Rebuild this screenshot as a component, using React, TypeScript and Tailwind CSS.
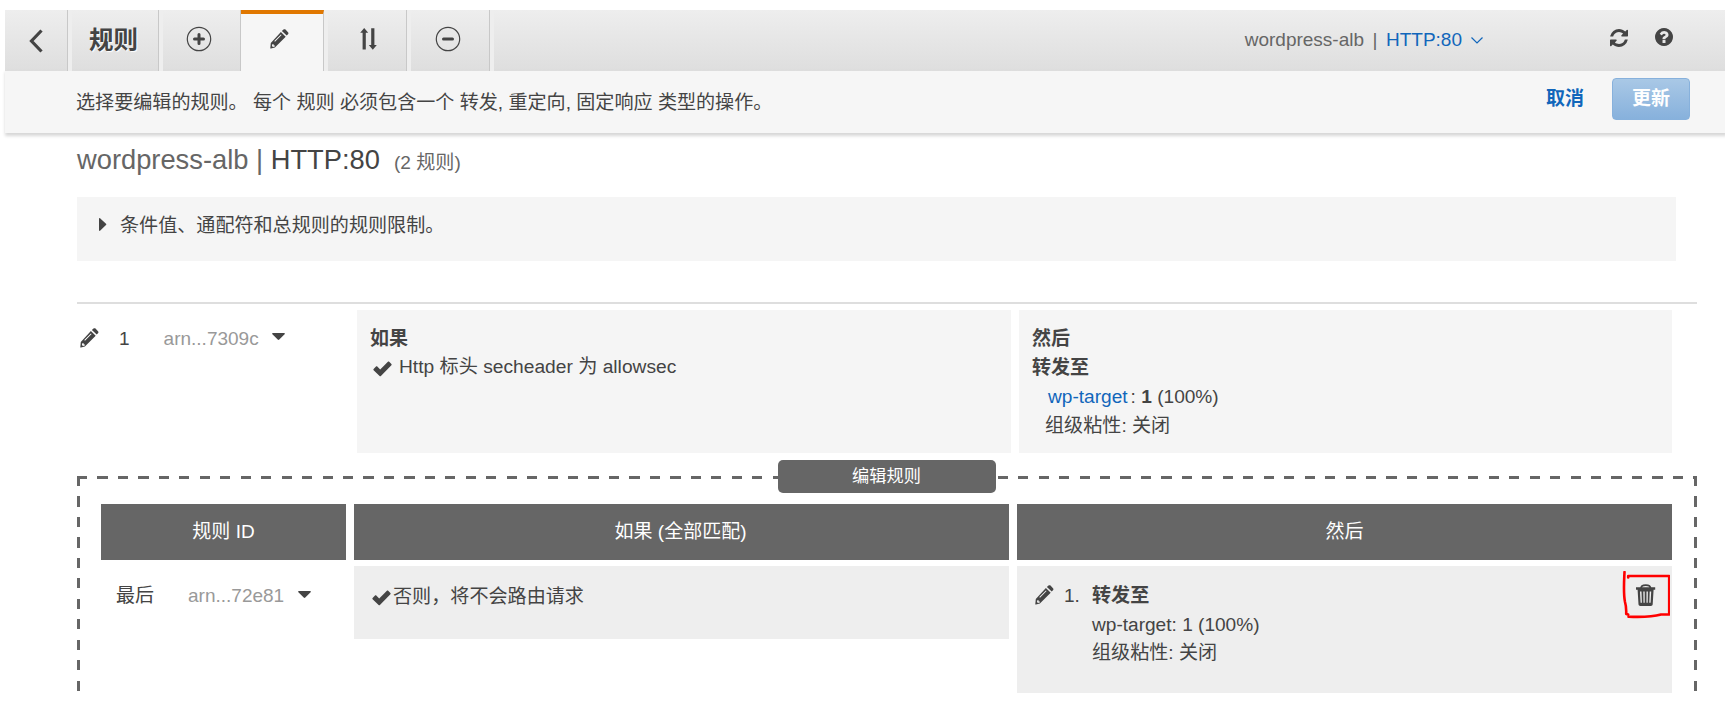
import type { ReactNode } from "react";

function Pencil() {
  return (
    <svg width="19" height="20" viewBox="0 0 19 20" fill="#444" className="block shrink-0">
      <path d="M11.900 2.100 13.500.6c.6-.6 1.400-.6 2 0L18 3.200c.6.600.6 1.400 0 2L16.700 6.600z" />
      <path fillRule="evenodd" d="M10.900 3 15.700 7.700 4.900 18.600 1 19.600H.3V18.900L.8 14zM10.900 5.400 4.300 12l.7.7 6.600-6.600zM2.300 15.300 1.900 17.100l1.100 1 1.900-.5-.1-1.200-1.200-.1-.1-1.200z" />
    </svg>
  );
}

function Check() {
  return (
    <svg width="19" height="16" viewBox="0 0 19 16" fill="#444" className="block shrink-0">
      <path d="M.6 7.900 3 5.500c.4-.4.900-.4 1.300 0L7.200 8.400 14.900.7c.4-.4.900-.4 1.300 0l2.200 2.200c.4.4.4.900 0 1.300L7.900 14.900c-.4.4-.900.4-1.300 0L.6 9.200c-.4-.4-.4-.900 0-1.300z" />
    </svg>
  );
}

function Caret() {
  return (
    <svg width="13" height="7" viewBox="0 0 13 7" fill="#444" className="block shrink-0">
      <path d="M1 0h11c.9 0 1.200.7.6 1.300L7.300 6.600c-.5.5-1.100.5-1.600 0L.4 1.300C-.2.7.1 0 1 0z" />
    </svg>
  );
}

function CircleIcon({ plus = false }: { plus?: boolean }) {
  return (
    <svg width="26" height="26" viewBox="0 0 26 26" fill="none" stroke="#444" className="-mt-1 block">
      <circle cx="13" cy="13" r="11.700" strokeWidth="1.200" />
      <path d={plus ? "M8.500 13h9M13 8.500v9" : "M8.500 13h9"} strokeWidth="3" strokeLinecap="round" />
    </svg>
  );
}

function Cell({ children, className }: { children?: ReactNode; className: string }) {
  return (
    <div className={`flex h-[61px] shrink-0 items-center justify-center border-r border-[#c8c8c8] ${className}`}>
      {children}
    </div>
  );
}

function Gap() {
  return <div className="h-[61px] w-1 shrink-0 bg-[#eee]" />;
}

function Toolbar() {
  return (
    <header className="flex h-[61px] bg-linear-to-b from-[#eee] to-[#dedede]">
      <Cell className="w-[63px]">
        <svg width="14" height="24" viewBox="0 0 14 24" fill="none" stroke="#444" strokeWidth="3.200" className="mr-px block">
          <path d="M12.500 1.500 2.500 12l10 10.500" />
        </svg>
      </Cell>
      <Gap />
      <Cell className="w-[87px] pr-[3px]">
        <h1 className="mt-px h-9 text-[24.500px] leading-9 font-bold [text-shadow:1px_1px_1px_#fff]">规则</h1>
      </Cell>
      <Gap />
      <Cell className="w-[78px] pr-[5px]">
        <CircleIcon plus />
      </Cell>
      <div className="flex h-[61px] w-[83px] shrink-0 items-start justify-center border-t-4 border-r border-t-[#e07700] border-r-[#c8c8c8] bg-[#f6f6f6] pt-[15px] pr-[5px]">
        <Pencil />
      </div>
      <Gap />
      <Cell className="w-[79px]">
        <svg width="17" height="22" viewBox="0 0 17 22" fill="#444" className="-mt-[3px] ml-0.5 block">
          <path d="M4.200 0 8.200 4.800H5.800v16.700H2.600V4.800H.2zM11.200.300h3.200V17h2.400l-4 4.800L8.800 17h2.400z" />
        </svg>
      </Cell>
      <Gap />
      <Cell className="w-[79px] pr-1">
        <CircleIcon />
      </Cell>
      <Gap />
      <div className="ml-auto flex h-[61px] items-start pt-[18px] pr-[52px]">
        <div className="flex h-6 items-center text-[19px] leading-6 whitespace-pre">
          <span className="text-[#666]">wordpress-alb</span>
          <span className="px-[8.5px] text-[#666]">|</span>
          <a className="text-[#1166bb]">HTTP:80</a>
          <svg width="12" height="7" viewBox="0 0 12 7" fill="none" stroke="#1166bb" strokeWidth="1.200" className="ml-[9px] block">
            <path d="M.5.500 6 6 11.500.500" />
          </svg>
        </div>
        <svg width="18" height="18" viewBox="0 0 1536 1536" fill="#444" className="mt-px ml-[127px] block">
          <path d="M1511 928q0 5-1 7-64 268-268 434.500T764 1536q-146 0-282.500-55T238 1324l-129 129q-19 19-45 19t-45-19-19-45V960q0-26 19-45t45-19h448q26 0 45 19t19 45-19 45l-137 137q71 66 161 102t187 36q134 0 250-65t186-179q11-17 53-117 8-23 30-23h192q13 0 22.500 9.500t9.500 22.500zm25-800v448q0 26-19 45t-45 19h-448q-26 0-45-19t-19-45 19-45l138-138Q969 256 768 256q-134 0-250 65T332 500q-11 17-53 117-8 23-30 23H50q-13 0-22.500-9.500T18 608v-7q65-268 270-434.500T768 0q146 0 284 55.500T1297 212l130-129q19-19 45-19t45 19 19 45z" />
        </svg>
        <svg width="18" height="18" viewBox="0 0 1536 1536" fill="#444" className="ml-[27px] block">
          <path d="M896 1248v-192q0-14-9-23t-23-9H672q-14 0-23 9t-9 23v192q0 14 9 23t23 9h192q14 0 23-9t9-23zm256-672q0-88-55.500-163T958 297t-170-41q-243 0-371 213-15 24 8 42l132 100q7 6 19 6 16 0 25-12 53-68 86-92 34-24 86-24 48 0 85.500 26t37.500 59q0 38-20 61t-68 45q-63 28-115.500 86.500T640 892v36q0 14 9 23t23 9h192q14 0 23-9t9-23q0-19 21.500-49.500T972 829q32-18 49-28.500t46-35 44.500-48 28-60.500 12.500-81zm384 192q0 209-103 385.500T1153.500 1433 768 1536t-385.500-103T103 1153.500 0 768t103-385.500T382.500 103 768 0t385.500 103T1433 382.500 1536 768z" />
        </svg>
      </div>
    </header>
  );
}

function ActionBar() {
  return (
    <div className="flex h-[62px] items-start bg-[#f6f6f6] pr-[35px] pl-[71px] shadow-[1px_2px_3px_1px_#d8d8d8]">
      <p className="mt-[18px] h-7 text-[19.080px] leading-7">选择要编辑的规则。 每个 规则 必须包含一个 转发, 重定向, 固定响应 类型的操作。</p>
      <a className="mt-[14px] ml-auto h-7 leading-7 font-bold text-[#1166bb]">取消</a>
      <button className="mt-[7px] ml-[28px] flex h-[42px] w-[78px] justify-center rounded border border-[#87b1dc] bg-linear-to-b from-[#a9c8e6] to-[#87b1dc] pt-[6px] leading-7 font-bold text-white">
        更新
      </button>
    </div>
  );
}

function FirstRule() {
  return (
    <section className="mt-[41px] mr-7 flex h-[151px] border-t-2 border-[#dedede] pt-1.5">
      <div className="flex w-[280px] items-start pt-[16px] pl-[3px]">
        <div className="pt-[2px]">
          <Pencil />
        </div>
        <span className="ml-[20px] leading-[26px]">1</span>
        <span className="ml-[34px] leading-[26px] text-[#999]">arn...7309c</span>
        <div className="pt-[7px] pl-[13px]">
          <Caret />
        </div>
      </div>
      <div className="h-[143px] w-[654px] bg-[#f5f5f5] pt-[14px] pl-[13px]">
        <div className="h-[29px] leading-[29px] font-bold">如果</div>
        <div className="-mt-px flex h-[29px] items-start text-[19.200px] leading-[29px]">
          <div className="pt-[9px] pr-[7px] pl-[3px]">
            <Check />
          </div>
          Http 标头 secheader 为 allowsec
        </div>
      </div>
      <div className="ml-2 h-[143px] w-[653px] bg-[#f5f5f5] pt-[14px] pl-[13px]">
        <div className="h-[29px] leading-[29px] font-bold">然后</div>
        <div className="h-[29px] leading-[29px] font-bold">转发至</div>
        <div className="h-[29px] pl-[16px] text-[19.100px] leading-[29px]">
          <a className="text-[#1166bb]">wp-target</a>
          <span className="pl-[3px]">: </span>
          <b>1</b> (100%)
        </div>
        <div className="h-[29px] pl-[13px] text-[19.100px] leading-[29px]">组级粘性: 关闭</div>
      </div>
    </section>
  );
}

function HeadCell({ children, className }: { children: ReactNode; className: string }) {
  return <div className={`h-14 bg-[#666] text-center leading-[56px] text-white ${className}`}>{children}</div>;
}

function EditedRule() {
  return (
    <section className="mt-[23px] h-[217px] w-[1620px] bg-[repeating-linear-gradient(to_right,#666_0_10.2px,transparent_10.2px_20.46px),repeating-linear-gradient(to_bottom,#666_0_10.2px,transparent_10.2px_20.46px),repeating-linear-gradient(to_bottom,#666_0_10.2px,transparent_10.2px_20.46px)] [background-position:0_0,0_0,100%_0] bg-no-repeat [background-size:100%_3px,3px_100%,3px_100%]">
      <div className="flex h-7 justify-center pr-px">
        <div className="-mt-4 h-[33px] w-[218px] shrink-0 rounded-[5px] bg-[#666] text-center text-[17.200px] leading-[33px] text-white">
          编辑规则
        </div>
      </div>
      <div className="flex gap-2 pl-6">
        <HeadCell className="w-[245px]">规则 ID</HeadCell>
        <HeadCell className="w-[655px] pr-0.5">如果 (全部匹配)</HeadCell>
        <HeadCell className="w-[655px]">然后</HeadCell>
      </div>
      <div className="mt-1.5 flex items-start gap-2 pl-6">
        <div className="flex w-[245px] items-start pt-[15px] pl-[15px] leading-[29px]">
          <span>最后</span>
          <span className="ml-[34px] text-[#999]">arn...72e81</span>
          <div className="pt-[10px] pl-[14px]">
            <Caret />
          </div>
        </div>
        <div className="flex h-[73px] w-[655px] items-start bg-[#eee] pt-[16px] pl-[18px] text-[19.100px] leading-[29px]">
          <div className="pt-[8px] pr-0.5">
            <Check />
          </div>
          否则，将不会路由请求
        </div>
        <div className="flex h-[127px] w-[655px] items-start bg-[#eee] pt-[16px] pl-[18px] text-[19.080px] leading-[28.500px]">
          <div className="pt-[3px]">
            <Pencil />
          </div>
          <span className="w-[38px] pl-[10px]">1.</span>
          <div>
            <div className="font-bold">转发至</div>
            <div>wp-target: 1 (100%)</div>
            <div>组级粘性: 关闭</div>
          </div>
          <svg width="50" height="50" viewBox="0 0 50 50" fill="none" className="-mt-[11px] mr-[2px] ml-auto block">
            <path d="M4.500 1C4 12 3.200 22 5 31c1.500 5 1.300 6 1.200 12l2 .5M8.200 6.500V5h41v38.500H41c-7 2-13 3-32.500 2.200" stroke="#f00" strokeWidth="2.600" strokeLinecap="round" strokeLinejoin="round" />
            <path d="M21 17.500c0-4.500 9.500-4.500 9.500 0" stroke="#444" strokeWidth="1.800" />
            <path fillRule="evenodd" fill="#444" d="M16 16.200h19.200v2.500h-1.600L32.700 33.300c-.1 1.100-.8 1.700-1.800 1.700H20.300c-1 0-1.700-.6-1.800-1.700l-.9-14.600H16zM20 20.500l.6 11.200h1.300l-.4-11.200zM23.300 20.500l.2 11.200h1.200V20.500zM26.500 20.500v11.200h1.200l.2-11.200zM29.700 20.500l-.4 11.200h1.300l.6-11.200z" />
          </svg>
        </div>
      </div>
    </section>
  );
}

export default function App() {
  return (
    <div className="h-[701px] w-[1725px] overflow-hidden bg-white pt-2.5 pl-[5px] font-['Liberation_Sans','Noto_Sans_CJK_SC',sans-serif] text-[19px] text-[#444]">
      <Toolbar />
      <ActionBar />
      <main className="pl-[72px]">
        <h2 className="flex h-[64px] items-baseline pt-[9px] text-[27.300px] leading-9 whitespace-pre">
          <span className="text-[#666]">wordpress-alb | </span>
          <span>HTTP:80</span>
          <span className="ml-3.5 text-[19.100px] text-[#666]">(2 规则)</span>
        </h2>
        <div className="flex h-16 w-[1599px] items-start bg-[#f5f5f5] pt-[15px] pl-[22px] text-[19.080px] leading-7">
          <svg width="8" height="13" viewBox="0 0 8 13" fill="#444" className="mt-[6px] mr-[13px] block">
            <path d="M0 1C0 .1.700-.2 1.300.4L7 5.800c.4.4.4.900 0 1.300L1.300 12.600C.7 13.200 0 12.900 0 12z" />
          </svg>
          条件值、通配符和总规则的规则限制。
        </div>
        <FirstRule />
        <EditedRule />
      </main>
    </div>
  );
}
